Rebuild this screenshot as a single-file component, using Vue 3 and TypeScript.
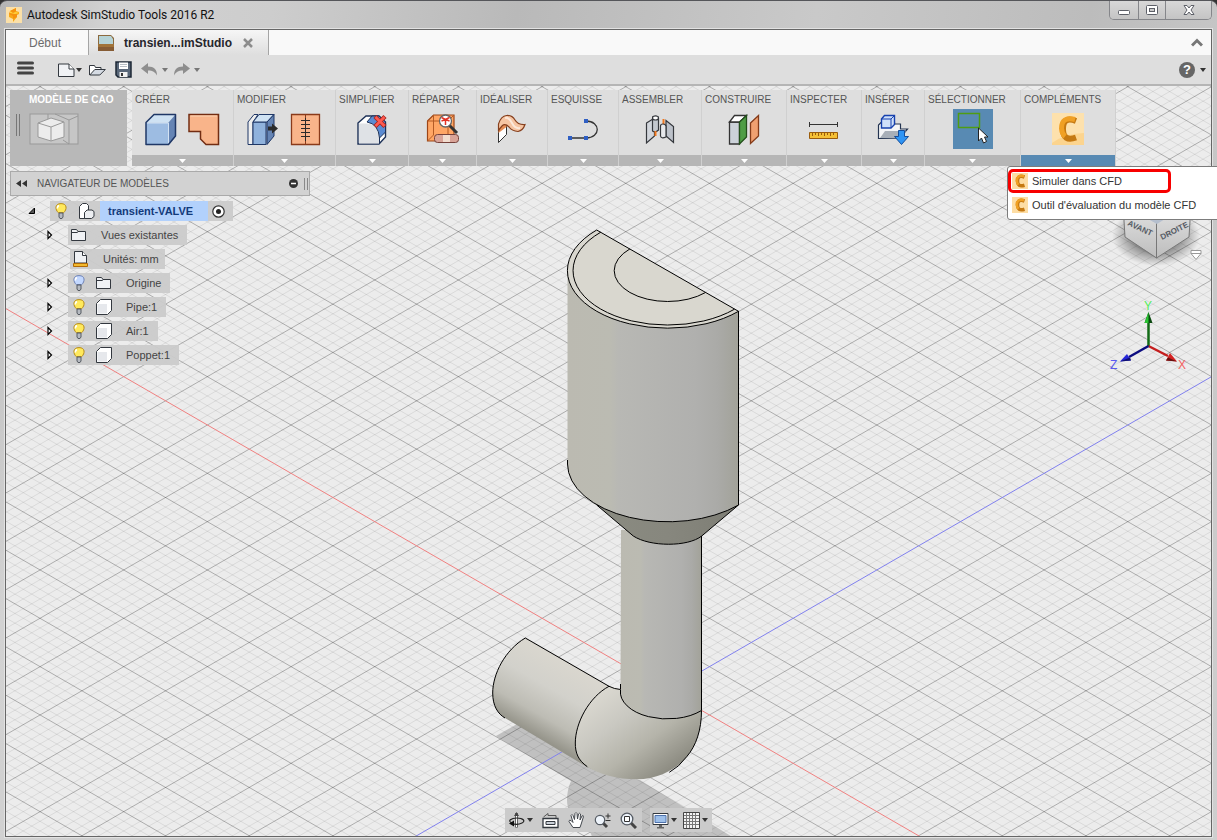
<script setup lang="ts">
interface Panel {
  id: string
  title: string
  active?: boolean
}
interface TreeRow {
  label: string
  bulb?: 'on' | 'off'
  icon: 'folder' | 'units' | 'body'
  expandable: boolean
}

const panels: Panel[] = [
  { id: 'create', title: 'CRÉER' },
  { id: 'modify', title: 'MODIFIER' },
  { id: 'simplify', title: 'SIMPLIFIER' },
  { id: 'repair', title: 'RÉPARER' },
  { id: 'idealize', title: 'IDÉALISER' },
  { id: 'sketch', title: 'ESQUISSE' },
  { id: 'assemble', title: 'ASSEMBLER' },
  { id: 'construct', title: 'CONSTRUIRE' },
  { id: 'inspect', title: 'INSPECTER' },
  { id: 'insert', title: 'INSÉRER' },
  { id: 'select', title: 'SÉLECTIONNER' },
  { id: 'addins', title: 'COMPLÉMENTS', active: true },
]

const rows: TreeRow[] = [
  { label: 'Vues existantes', icon: 'folder', expandable: true },
  { label: 'Unités: mm', icon: 'units', expandable: false },
  { label: 'Origine', bulb: 'off', icon: 'folder', expandable: true },
  { label: 'Pipe:1', bulb: 'on', icon: 'body', expandable: true },
  { label: 'Air:1', bulb: 'on', icon: 'body', expandable: true },
  { label: 'Poppet:1', bulb: 'on', icon: 'body', expandable: true },
]

const menu: string[] = ['Simuler dans CFD', "Outil d'évaluation du modèle CFD"]

// Isometric floor grid: both line families run through the origin at 30 degrees.
const origin = { x: 667.6, y: 690.8 }
const step = 48.33 / 5
const slope = 0.5776
function gridPath(major: boolean): string {
  let d = ''
  for (let i = -130; i <= 80; i++) {
    if ((i % 5 === 0) !== major || (major && i === 0)) continue
    const y = origin.y + i * step
    const l = origin.x * slope
    const r = (1217 - origin.x) * slope
    d += `M0 ${(y - l).toFixed(1)}L1217 ${(y + r).toFixed(1)}M0 ${(y + l).toFixed(1)}L1217 ${(y - r).toFixed(1)}`
  }
  return d
}
const minorGrid = gridPath(false)
const majorGrid = gridPath(true)
</script>

<template>
  <div class="window">
    <header class="titlebar">
      <svg class="app-icon" width="16" height="16" viewBox="0 0 16 16">
        <rect width="16" height="16" fill="#fbe0a8" />
        <path d="M10 1v3l3 1v2l-2 1v2l-4 5v-3l-4-2V7l1-1V4z" fill="#f8a818" />
        <path d="M4 4l6-3v3l-3 2 4 1v3l-4 2v-3L3 7z" fill="#f5920f" />
        <path d="M4 4l3 2 3-1 3 1-4 1-5-1z" fill="#ffd23c" />
      </svg>
      <h1>Autodesk SimStudio Tools 2016 R2</h1>
      <div class="win-buttons">
        <button type="button" aria-label="Réduire">
          <svg width="14" height="14" viewBox="0 0 14 14"><rect x="1.500" y="7.500" width="11" height="4" rx="1" fill="#fff" stroke="#5d6068" /></svg>
        </button>
        <button type="button" aria-label="Agrandir">
          <svg width="14" height="14" viewBox="0 0 14 14"><rect x="1.500" y="2.500" width="11" height="9" rx="1" fill="#fff" stroke="#5d6068" /><rect x="4.500" y="5.500" width="5" height="3" fill="#ccc" stroke="#5d6068" /></svg>
        </button>
        <button type="button" aria-label="Fermer">
          <svg width="14" height="14" viewBox="0 0 14 14"><path d="M2 2.500h3l2 2.500 2-2.500h3L9 7l3 4.500H9L7 9l-2 2.500H2L5 7z" fill="#fff" stroke="#5d6068" /></svg>
        </button>
      </div>
    </header>

    <div class="frame">
      <nav class="tabs">
        <button type="button" class="tab home">Début</button>
        <div class="tab current">
          <svg width="16" height="16" viewBox="0 0 16 16">
            <path d="M0 0h13l3 3v13H0z" fill="#8c6a3e" />
            <path d="M1 1h12l2 3v6H1z" fill="#b6d3d6" />
            <path d="M0 9h16v7H0z" fill="#a17339" />
            <path d="M0 12h16v4H0z" fill="#865c34" />
          </svg>
          <span>transien...imStudio</span>
          <button type="button" class="plain" aria-label="Fermer l'onglet">
            <svg width="10" height="10" viewBox="0 0 10 10"><path d="M1 1l8 8M9 1L1 9" stroke="#8c8c8c" stroke-width="2.500" /></svg>
          </button>
        </div>
        <button type="button" class="plain collapse" aria-label="Replier">
          <svg width="12" height="9" viewBox="0 0 12 9"><path d="M1 7.500l5-5 5 5" fill="none" stroke="#777" stroke-width="3" /></svg>
        </button>
      </nav>

      <div class="toolbar">
        <button type="button" class="plain menu-btn" aria-label="Menu">
          <svg width="17" height="18" viewBox="0 0 17 18"><path d="M1.500 2h14M1.500 7h14M1.500 12h14" stroke="#444" stroke-width="3" stroke-linecap="round" /></svg>
        </button>
        <button type="button" class="plain file-btn" aria-label="Nouveau">
          <svg width="17" height="14" viewBox="0 0 17 14"><path d="M.5 1h10.500l5 5v7.500H.5z" fill="#f0f2f5" stroke="#33383f" /><path d="M11 1v5h5" fill="#fff" stroke="#33383f" /></svg>
          <svg width="6" height="4" viewBox="0 0 6 4"><path d="M0 0h6L3 4z" fill="#333" /></svg>
        </button>
        <button type="button" class="plain" aria-label="Ouvrir">
          <svg width="17" height="14" viewBox="0 0 17 14"><path d="M.5 12V2.500h5l1 2h5.500v3" fill="#fff" stroke="#33383f" /><path d="M.8 12l5-5.500h10.500L10.800 12z" fill="#d5dbe3" stroke="#33383f" /></svg>
        </button>
        <button type="button" class="plain" aria-label="Enregistrer">
          <svg width="17" height="17" viewBox="0 0 17 17"><path d="M1 1h15v15H3l-2-2z" fill="#596779" stroke="#1c2735" stroke-width="1.500" /><path d="M4 1.500h9V8H4z" fill="#fff" /><path d="M5 3.500h7M5 5.500h7" stroke="#b8bec5" /><path d="M4.500 11h8v5h-8z" fill="#f1f1f1" /><path d="M6 12h2v3H6z" fill="#333" /></svg>
        </button>
        <button type="button" class="plain undo" aria-label="Annuler">
          <svg width="17" height="13" viewBox="0 0 17 13"><path d="M0 5.500L7 0v3.500c6 0 9 3 9 9C14 9 12 7.500 7 7.500V11z" fill="#8e8e8e" /></svg>
          <svg width="6" height="4" viewBox="0 0 6 4"><path d="M0 0h6L3 4z" fill="#777" /></svg>
        </button>
        <button type="button" class="plain redo" aria-label="Rétablir">
          <svg width="17" height="13" viewBox="0 0 17 13"><path d="M17 5.500L10 0v3.500c-6 0-9 3-9 9C3 9 5 7.500 10 7.500V11z" fill="#8e8e8e" /></svg>
          <svg width="6" height="4" viewBox="0 0 6 4"><path d="M0 0h6L3 4z" fill="#777" /></svg>
        </button>
        <button type="button" class="plain help" aria-label="Aide">
          <span class="help-dot">?</span>
          <svg width="6" height="4" viewBox="0 0 6 4"><path d="M0 0h6L3 4z" fill="#333" /></svg>
        </button>
      </div>

      <main class="viewport">
        <svg class="scene" viewBox="6 86 1205 750" preserveAspectRatio="xMidYMid slice">
          <defs>
            <linearGradient id="body" x1="0" x2="1" y1="0" y2="0">
              <stop offset="0" stop-color="#bbbab1" /><stop offset=".25" stop-color="#bbbbb2" />
              <stop offset=".3" stop-color="#b8b8b4" /><stop offset=".75" stop-color="#b0b0ae" />
              <stop offset=".88" stop-color="#aaaaa7" /><stop offset="1" stop-color="#a2a299" />
            </linearGradient>
            <linearGradient id="cone" x1="0" x2="1" y1="0" y2="0">
              <stop offset="0" stop-color="#8a8b81" /><stop offset=".5" stop-color="#87877e" /><stop offset="1" stop-color="#7d7d74" />
            </linearGradient>
            <linearGradient id="pipe" gradientUnits="userSpaceOnUse" x1="566" y1="660" x2="526" y2="730">
              <stop offset="0" stop-color="#dad7cf" /><stop offset=".4" stop-color="#d2d1cb" />
              <stop offset=".75" stop-color="#bdbcb4" /><stop offset="1" stop-color="#95948a" />
            </linearGradient>
            <linearGradient id="elbow" gradientUnits="userSpaceOnUse" x1="600" y1="695" x2="665" y2="782">
              <stop offset="0" stop-color="#d9d7cf" /><stop offset=".3" stop-color="#c9c8c1" />
              <stop offset=".6" stop-color="#b5b4aa" /><stop offset="1" stop-color="#85847a" />
            </linearGradient>
          </defs>
          <rect x="0" y="80" width="1217" height="760" fill="#ececec" />
          <path d="M496 736L517 724L580 758L606 774L640 780L734 838H592C590 820 567 822 567 800Q567 790 571 781Z" fill="#c0c0c0" />
          <path :d="minorGrid" stroke="#000" stroke-opacity=".08" fill="none" />
          <path :d="majorGrid" stroke="#000" stroke-opacity=".27" fill="none" />
          <path d="M0 305.200L1217 1008.100" stroke="#f08080" />
          <path d="M0 1076.400L1217 373.500" stroke="#8080ee" />

          <path d="M525.300 638L609 686.300L620 690L640 760L606.700 774Q596 771 587 767L505 718C498 714 492.700 706 492.700 693C492.700 674 505 650 525.300 638Z" fill="url(#pipe)" />
          <path d="M609 686.300L620.500 689.500L701.700 710.700C701.500 730 696 746 686.700 756.700C678 768 659 779.300 636.700 779.300C617 779.300 599 774 587.300 766.700C578 760 575.300 753 575.300 743C575.300 723 589 697 609 686.300Z" fill="url(#elbow)" />
          <path d="M621 530H701.500V710.500A47 27 0 0 1 620.500 690Z" fill="url(#body)" />
          <path d="M596.700 505L633.300 536C650 547 688 547 701.700 536L738.500 505Z" fill="url(#cone)" />
          <path d="M567.500 268V464A100.400 58 0 0 0 738.500 505V311Z" fill="url(#body)" />
          <path d="M596.700 230A100 57.400 0 0 0 738.500 311.300Z" fill="#d9d7cf" />
          <g fill="none" stroke="#000">
            <path d="M596.700 230A100 57.400 0 0 0 738.500 311.300Z" />
            <path d="M600.900 232.100A94 54 0 0 0 734.500 309.200" />
            <path d="M629.900 248.900A53 30.500 0 0 0 705.500 292.500" />
            <path d="M567.500 460V464A100.400 58 0 0 0 738.500 505V311" />
            <path d="M596.700 505L633.300 536C650 547 688 547 701.700 536L738.500 505" />
            <path d="M701.500 536V710.500A47 27 0 0 1 620.500 690" />
            <path d="M505 718C498 714 492.700 706 492.700 693C492.700 674 505 650 525.300 638L609 686.300Q614 689 620.500 689.500V684" />
            <path d="M609 686.300C589 697 575.300 723 575.300 743C575.300 753 578 760 587.300 766.700" />
            <path d="M701.500 710.700C701.500 730 696 746 686.700 756.700Q679 767 669.300 772.300" />
          </g>
        </svg>

        <section class="ribbon">
          <button type="button" class="workspace">
            <span class="grip"></span>
            <span class="workspace-body">
              <span>MODÈLE DE CAO</span>
              <svg width="50" height="32" viewBox="0 0 50 32">
                <rect x="1" y="1" width="48" height="30" fill="#c6c6c6" stroke="#999" />
                <path d="M19 1V9M26 1l14 6 9-4M40 7v24M34 27l6 4" fill="none" stroke="#999" />
                <path d="M9 10l13-5 13 4v15l-13 4-13-4z" fill="#ececec" stroke="#999" />
                <path d="M9 10l13 4 13-5M22 14v14" fill="none" stroke="#999" />
              </svg>
            </span>
          </button>
          <div class="panels">
            <div v-for="p in panels" :key="p.id" class="panel" :class="{ active: p.active }">
              <span class="panel-title">{{ p.title }}</span>
              <div class="tools">
                <template v-if="p.id === 'create'">
                  <button type="button" class="plain" aria-label="Boîte">
                    <svg class="tool" viewBox="0 0 34 34" stroke="#1f3766" stroke-linejoin="round"><path d="M2 10.500h22.500v22H2z" fill="#9dbce2" stroke="none" /><path d="M2 10.500l8-8h21.500l-7 8z" fill="#cfe2f3" stroke="none" /><path d="M24.500 10.500l7-8V24l-7 8.500z" fill="#6584b4" stroke="none" /><path d="M3 11h21.500v20.500" fill="none" stroke="#d3e2f3" /><path d="M2 10.500l8-8h21.500V24l-7 8.500H2z" fill="none" stroke-width="1.500" /></svg>
                  </button>
                  <button type="button" class="plain" aria-label="Corps">
                    <svg class="tool" viewBox="0 0 34 34"><path d="M2 2.500h29.500v30H19L13.500 27v-7.500H2z" fill="#f9b48a" stroke="#722c12" stroke-width="1.500" /><path d="M3.500 4h26.500" stroke="#fcd3b4" /></svg>
                  </button>
                </template>
                <template v-else-if="p.id === 'modify'">
                  <button type="button" class="plain" aria-label="Appuyer/Tirer">
                    <svg class="tool" viewBox="0 0 34 34" stroke="#1f3766"><path d="M2 10l6-7.500h4L7 10v22.500H2z" fill="#eee" /><path d="M7 10h13v22.500H7z" fill="#90b2dc" /><path d="M7 10l6-7.500h15l-7 7.500z" fill="#cfe2f3" /><path d="M21 10l7-7.500V24l-7 8.500z" fill="#6584b4" /><path d="M22 14.500h4v-3l6 5-6 5v-3h-4z" fill="#2b2b2b" stroke="none" /></svg>
                  </button>
                  <button type="button" class="plain" aria-label="Coudre">
                    <svg class="tool" viewBox="0 0 34 34"><path d="M2.500 2.500h28v30h-28z" fill="#f9b48a" stroke="#8a3a1a" stroke-width="1.300" /><path d="M16.500 3v29" stroke="#8a3a1a" /><path d="M16.500 6v23M12 8.500h9M12 12.500h9M12 16.500h9M12 20.500h9M12 24.500h9" stroke="#2a2a2a" /></svg>
                  </button>
                </template>
                <button v-else-if="p.id === 'simplify'" type="button" class="plain" aria-label="Simplifier">
                  <svg class="tool" viewBox="0 0 34 34" stroke="#1d3157"><path d="M3 11l8-7h13l6.500 6v15l-6.500 7H3z" fill="#fff" stroke-width="1.400" /><path d="M4 11.500h8q12 1 12 15v5H4z" fill="#dfe2e6" stroke="none" /><path d="M12 10l5-6h7l6.500 6v10l-6 6q-1-14-12.500-16z" fill="#5b8bd2" /><path d="M24.500 26v6" fill="none" /><path d="M20 4.500l10 10M30 4.500l-10 10" stroke="#a82820" stroke-width="4.500" /><path d="M20.500 5l9 9M29.500 5l-9 9" stroke="#ff5a50" stroke-width="2.500" /></svg>
                </button>
                <button v-else-if="p.id === 'repair'" type="button" class="plain" aria-label="Réparer">
                  <svg class="tool" viewBox="0 0 34 34"><path d="M1.500 9l6-6H28v20l-6 6H1.500z" fill="#ffa665" stroke="#9c4516" stroke-width="1.200" /><path d="M1.500 9H22V29M22 9l6-6M7.500 3v20l-6 6" fill="none" stroke="#b45b25" /><path d="M23 13l8 8" stroke="#333" stroke-width="3" /><circle cx="19.500" cy="9" r="6" fill="#fff" stroke="#666" stroke-width="1.300" /><path d="M15.500 5.500l4 2 4-2M15.500 9l4-1.500V13M23.500 9l-4-1.500" fill="none" stroke="#e33224" stroke-width="1.500" /><rect x="8.500" y="22.500" width="24" height="8" rx="3" fill="#d9a498" stroke="#75413a" /><path d="M17 23h7v7h-7z" fill="#f2ddcf" /></svg>
                </button>
                <button v-else-if="p.id === 'idealize'" type="button" class="plain" aria-label="Idéaliser">
                  <svg class="tool" viewBox="0 0 34 34"><path d="M3.500 14v16.500l8-8V10z" fill="#fff" stroke="#333" /><path d="M3.500 21V12L11.500 8v7z" fill="#e58d55" /><path d="M3.500 12Q6 4 11.500 3.500 17 3 20 8t10 4.500q-2 6-7 7Q17 19 14 15q-4-4-7-1-2 2-3.500 5z" fill="#f6c5a3" stroke="#863f1d" stroke-width="1.200" /><path d="M10 6q4-1 7 5t8 5" fill="none" stroke="#fff" stroke-width="2" opacity=".6" /></svg>
                </button>
                <button v-else-if="p.id === 'sketch'" type="button" class="plain" aria-label="Esquisse">
                  <svg class="tool" viewBox="0 0 34 34"><path d="M4 26h16c15 0 15-17 0-17" fill="none" stroke="#333" stroke-width="1.300" /><path d="M2 24h4v4H2zM18 24h4v4h-4zM18 7h4v4h-4z" fill="#2f5fc4" /></svg>
                </button>
                <button v-else-if="p.id === 'assemble'" type="button" class="plain" aria-label="Assembler">
                  <svg class="tool" viewBox="0 0 34 34" stroke="#35383d" stroke-width="1.200"><path d="M3.500 11l8-5v18l-8 7z" fill="#d2d6dc" /><path d="M9.500 6q0-2 3-2t3 2v12q-3 3-6 1z" fill="#c3c8cf" /><ellipse cx="12.500" cy="6" rx="3" ry="2" fill="#fff" /><path d="M12.500 19v5M20.500 7v6" stroke="#f07820" stroke-width="2" /><path d="M23 8.500l7.500 6v16L23 24z" fill="#bcc1c9" /><path d="M17.500 14q0-2 2.500-2t3 2v11q-5 2-5.500-1z" fill="#e6e8eb" /></svg>
                </button>
                <button v-else-if="p.id === 'construct'" type="button" class="plain" aria-label="Construire">
                  <svg class="tool" viewBox="0 0 34 34" stroke-width="1.300"><path d="M2.500 10h10v22h-10z" fill="#ccd2d9" stroke="#333" /><path d="M2.500 10l5-6.500h12l-7 6.500z" fill="#fff" stroke="#333" /><path d="M12.500 10l7-6.500V25l-7 7z" fill="#4f9d45" stroke="#234f1c" /><path d="M23.500 11l8-7.500V24l-8 7.500z" fill="#f0a070" stroke="#843b19" /></svg>
                </button>
                <button v-else-if="p.id === 'inspect'" type="button" class="plain" aria-label="Mesurer">
                  <svg class="tool" viewBox="0 0 34 34"><path d="M2.500 12.500h28M2.500 10v5M30.500 10v5" stroke="#333" /><path d="M2.500 20.500h28v6h-28z" fill="#f5c035" stroke="#9a5c0c" /><path d="M5.500 21v3M8.500 21v2M11.500 21v3M14.500 21v2M17.500 21v3M20.500 21v2M23.500 21v3M26.500 21v2" stroke="#9a5c0c" /></svg>
                </button>
                <button v-else-if="p.id === 'insert'" type="button" class="plain" aria-label="Insérer">
                  <svg class="tool" viewBox="0 0 34 34"><path d="M2.500 26.500V13l3-3h13v2h6v5h7l-8 9.500z" fill="#f4f5f7" stroke="#243451" stroke-width="1.200" /><path d="M4 26l5-7h21l-7 7.500z" fill="#a8afb8" /><path d="M5.500 7l3-3.500h10v9L15 16H5.500z" fill="#cfe0fa" stroke="#1741ae" stroke-width="1.400" /><path d="M5.500 7H15v9M15 7l3.500-3.500" fill="none" stroke="#1741ae" /><path d="M22.500 18.500h6v6h4l-7 8-7-8h4z" fill="#2e94f4" stroke="#124c9b" /></svg>
                </button>
                <button v-else-if="p.id === 'select'" type="button" class="plain select-on" aria-label="Sélectionner">
                  <svg width="40" height="40" viewBox="0 0 40 40"><rect x="5.500" y="4.500" width="21" height="14" fill="none" stroke="#4f9d12" stroke-width="1.500" /><path d="M25.500 19v13l3-3 2 5 3-1.500-2-4.500h3.500z" fill="#fff" stroke="#222" /></svg>
                </button>
                <button v-else type="button" class="plain" aria-label="CFD">
                  <svg width="32" height="32" viewBox="0 0 32 32"><rect width="32" height="32" fill="#fcd48e" /><path d="M0 0h32v20Q14 20 0 30z" fill="#fde1ad" /><path d="M24 8Q11 3 11 16t13 8.500" fill="none" stroke="#c57912" stroke-width="6" /><path d="M23 6.500Q9.500 3 9.500 15.500 10 21 13 23.500" fill="none" stroke="#f0a024" stroke-width="5" /></svg>
                </button>
              </div>
              <button type="button" class="panel-foot" :aria-label="p.title">
                <svg width="7" height="4" viewBox="0 0 7 4"><path d="M0 0h7L3.500 4z" fill="#fff" /></svg>
              </button>
            </div>
            <ul class="addin-menu">
              <li v-for="(m, i) in menu" :key="m">
                <button type="button" :class="{ marked: i === 0 }">
                  <svg width="16" height="16" viewBox="0 0 32 32"><rect width="32" height="32" fill="#fddda4" /><path d="M25 8Q11 3 11 16t14 8.500" fill="none" stroke="#c57912" stroke-width="7" /><path d="M24 6.500Q9.500 3 9.500 15.500 10 21 13 23.500" fill="none" stroke="#f0a024" stroke-width="5" /></svg>
                  <span>{{ m }}</span>
                </button>
              </li>
            </ul>
          </div>
        </section>

        <aside class="browser">
          <div class="browser-head">
            <svg width="11" height="7" viewBox="0 0 11 7"><path d="M5 0v7L0 3.500zM11 0v7L6 3.500z" fill="#333" /></svg>
            <h2>NAVIGATEUR DE MODÈLES</h2>
            <svg width="9" height="9" viewBox="0 0 9 9"><circle cx="4.500" cy="4.500" r="4.500" fill="#333" /><path d="M2 4.500h5" stroke="#fff" stroke-width="1.500" /></svg>
            <span class="head-grip"></span>
          </div>
          <div class="tree">
            <div class="row root">
              <svg class="twist" width="8" height="8" viewBox="0 0 8 8"><path d="M6.500 1v5.500H1z" fill="#555" stroke="#000" /></svg>
              <div class="cell">
                <svg class="bulb" width="12" height="16" viewBox="0 0 12 16"><path d="M6 .6c6.500 0 6 6 2.700 9H3.300C0 6.600-.5.600 6 .6z" fill="#ffe95c" stroke="#b58a1b" /><path d="M4 2.500q-2 1-1.500 3" fill="none" stroke="#fff" stroke-width="1.500" /><path d="M4 10h4v4l-1 1.500H5L4 14z" fill="#b5b9c0" stroke="#555a62" /></svg>
                <svg class="asm" width="17" height="17" viewBox="0 0 17 17"><path d="M1.500 15.500V3.500l3-3h4l2 2v5L7 9.500v6z" fill="#fff" stroke="#33383f" /><path d="M6.500 15.500V9.500L9 7h5l2 1.500v5L13.500 15.500z" fill="#eceef1" stroke="#33383f" /></svg>
                <strong>transient-VALVE</strong>
                <svg width="13" height="13" viewBox="0 0 13 13"><circle cx="6.500" cy="6.500" r="5.700" fill="#fff" stroke="#333" stroke-width="1.200" /><circle cx="6.500" cy="6.500" r="2.500" fill="#222" /></svg>
              </div>
            </div>
            <div v-for="r in rows" :key="r.label" class="row">
              <svg class="twist" width="8" height="10" viewBox="0 0 8 10"><path v-if="r.expandable" d="M2 1.500v7L5.500 5z" fill="#fff" stroke="#000" stroke-width="1.200" /></svg>
              <div class="cell" :class="{ units: r.icon === 'units' }">
                <svg v-if="r.bulb" class="bulb" width="12" height="16" viewBox="0 0 12 16"><path d="M6 .6c6.500 0 6 6 2.700 9H3.300C0 6.600-.5.600 6 .6z" :fill="r.bulb === 'on' ? '#ffe95c' : '#c3d8ff'" :stroke="r.bulb === 'on' ? '#b58a1b' : '#6d80b3'" /><path d="M4 2.500q-2 1-1.500 3" fill="none" stroke="#fff" stroke-width="1.500" /><path d="M4 10h4v4l-1 1.500H5L4 14z" fill="#b5b9c0" stroke="#555a62" /></svg>
                <svg v-if="r.icon === 'folder'" width="16" height="16" viewBox="0 0 16 16"><path d="M.5 13.500v-11h5l1.500 2h7.500v9z" fill="#eff1f4" stroke="#33383f" /><path d="M1 5.500h5l1.500-1" fill="none" stroke="#33383f" /></svg>
                <svg v-else-if="r.icon === 'units'" width="16" height="16" viewBox="0 0 16 16"><path d="M1.500 12V.5h8l4 4V12z" fill="#eff1f4" stroke="#33383f" /><path d="M9.500.5v4h4" fill="#fff" stroke="#33383f" /><path d="M.5 12.500h14v3H.5z" fill="#f3b92c" stroke="#b06a08" /></svg>
                <svg v-else width="16" height="16" viewBox="0 0 16 16"><path d="M.5 4.500l4-4h11v11l-4 4H.5z" fill="#fff" stroke="#33383f" /><path d="M1.500 5h9.500v9.500H1.500z" fill="#e6e8ec" /></svg>
                <span class="name">{{ r.label }}</span>
              </div>
            </div>
          </div>
        </aside>

        <svg class="orient" width="112" height="170" viewBox="1102 206 112 170">
          <defs>
            <radialGradient id="cubeshade"><stop offset=".3" stop-color="#000" stop-opacity=".6" /><stop offset="1" stop-color="#000" stop-opacity="0" /></radialGradient>
            <linearGradient id="face" x1="0" x2="0" y1="0" y2="1"><stop offset="0" stop-color="#e2e2e2" /><stop offset="1" stop-color="#bdbdbd" /></linearGradient>
          </defs>
          <ellipse cx="1156" cy="236" rx="44" ry="30" fill="url(#cubeshade)" />
          <path d="M1124 206h33v52l-32-21z" fill="url(#face)" />
          <path d="M1157 206h33l-1 31-32 21z" fill="url(#face)" />
          <path d="M1124 206v15l1 16 31.500 21 32.500-21 1-16v-15M1156.500 222v36" fill="none" stroke="#777" />
          <path d="M1148 219l9 5 8-5z" fill="#b5bfce" />
          <g class="cube-text">
            <text transform="translate(1127 225) rotate(25)">AVANT</text>
            <text transform="translate(1162 240) rotate(-27)">DROITE</text>
          </g>
          <path d="M1191 250.500h10v3l-5 6-5-6z M1191 253.500h10" fill="#fff" stroke="#999" />
          <path d="M1148.500 346V318" stroke="#126b16" stroke-width="2.500" />
          <path d="M1148.500 312l4 11h-8z" fill="#0b4910" /><path d="M1148.500 312v11h-4z" fill="#28c531" />
          <path d="M1148.500 346L1168 356" stroke="#c41e1e" stroke-width="2.500" />
          <path d="M1177 361.500l-11-1 4-7.500z" fill="#d42222" /><path d="M1177 361.500l-11-1 2-3z" fill="#681111" />
          <path d="M1148.500 346L1129 357" stroke="#0c0c80" stroke-width="2.500" />
          <path d="M1120 361.500l7-7.500 4 6.500z" fill="#2828d8" /><path d="M1120 361.500l10-4 1 3z" fill="#101070" />
          <g class="axis-text">
            <text x="1144" y="310" fill="#52ee5a">Y</text>
            <text x="1178" y="369" fill="#f46262">X</text>
            <text x="1110" y="369" fill="#5a5af0">Z</text>
          </g>
        </svg>

        <div class="navbar">
          <div class="nav-group">
            <button type="button" class="plain" aria-label="Orbite">
              <svg width="17" height="17" viewBox="0 0 17 17"><path d="M8.500 15.500V1" stroke="#444" stroke-width="2.500" /><path d="M8.500 15V2" stroke="#fff" /><path d="M6 4l2.500-4L11 4z" fill="#444" /><path d="M4 11C-1 9 3 6 9 6s9 3 5 5-5 1.500-9 1" fill="none" stroke="#222" stroke-width="1.200" /><path d="M1 11.500l5-3v6z" fill="#111" /></svg>
              <svg class="nav-caret" width="6" height="4" viewBox="0 0 6 4"><path d="M0 0h6L3 4z" fill="#333" /></svg>
            </button>
            <button type="button" class="plain" aria-label="Regarder">
              <svg width="17" height="17" viewBox="0 0 17 17"><path d="M1 6.500h15v9H1z" fill="#fff" stroke="#33383f" stroke-width="1.300" /><path d="M4 9.500h9v3H4z" fill="#cbd1d9" stroke="#33383f" /><path d="M1.500 5L6 1.500v2h8V6" fill="none" stroke="#555" /></svg>
            </button>
            <button type="button" class="plain" aria-label="Panoramique">
              <svg width="17" height="17" viewBox="0 0 17 17"><path d="M5 15.500L1 9.500q0-2 2-1l2 2-2-7q1-2 2 0l1.500 4L7 1.500q1-2 2 0L9.500 7l1-5q1-1.500 2 0L12 8l2-4q1.500-1 1.500.5L13.500 11 12 15.500z" fill="#fff" stroke="#44484e" /></svg>
            </button>
            <button type="button" class="plain" aria-label="Zoom">
              <svg width="17" height="17" viewBox="0 0 17 17"><path d="M9 11l4 4" stroke="#444" stroke-width="3" /><circle cx="6" cy="8" r="4.700" fill="#eef4fb" stroke="#555b63" stroke-width="1.200" /><path d="M11.500 4h5M14 1.500v5M11.500 8.500h5" stroke="#333" /></svg>
            </button>
            <button type="button" class="plain" aria-label="Ajuster">
              <svg width="17" height="17" viewBox="0 0 17 17"><path d="M11 11l5 5" stroke="#444" stroke-width="3" /><circle cx="7" cy="7" r="5.800" fill="#eef4fb" stroke="#555b63" stroke-width="1.300" /><path d="M4.500 4.500h5v5h-5z" fill="#fff" stroke="#333" /></svg>
            </button>
          </div>
          <div class="nav-group">
            <button type="button" class="plain" aria-label="Affichage">
              <svg width="17" height="17" viewBox="0 0 17 17"><path d="M1 1.500h15v11H1z" fill="#fff" stroke="#33383f" /><path d="M3 3.500h11v7H3z" fill="#9dbfea" stroke="#4e72ac" /><path d="M7 13h3v2h2v1.500H5V15h2z" fill="#666" /></svg>
              <svg width="6" height="4" viewBox="0 0 6 4"><path d="M0 0h6L3 4z" fill="#333" /></svg>
            </button>
            <button type="button" class="plain" aria-label="Grille">
              <svg width="17" height="17" viewBox="0 0 17 17"><path d="M.5.500h16v16H.5z" fill="#f4f4f4" stroke="#444" /><path d="M3.500 1v15M6.500 1v15M9.500 1v15M12.500 1v15M1 3.500h15M1 6.500h15M1 9.500h15M1 12.500h15" stroke="#777" /></svg>
              <svg width="6" height="4" viewBox="0 0 6 4"><path d="M0 0h6L3 4z" fill="#333" /></svg>
            </button>
          </div>
        </div>
      </main>
    </div>
  </div>
</template>

<style>
body {
  margin: 0;
  background: #333;
}
</style>

<style scoped>
.window {
  box-sizing: border-box;
  min-height: 100vh;
  display: flex;
  flex-direction: column;
  padding: 0 5px 3px;
  overflow: hidden;
  border-radius: 7px 7px 0 0;
  border-top: 1px solid #55565a;
  background: linear-gradient(100deg, #b4b4b4 0, #d2d2d2 8%, #cdcdcd 20%, #b9b9b9 38%, #c9c9c9 60%, #bcbcbc 80%, #cfcfcf 100%);
  font-family: "Liberation Sans", Arial, sans-serif;
  font-size: 11px;
  color: #444;
}
button {
  font: inherit;
  color: inherit;
  margin: 0;
  border: 0;
}
svg {
  display: block;
  flex: none;
}
.plain {
  display: flex;
  align-items: center;
  padding: 0;
  background: none;
}
.titlebar {
  display: flex;
  align-items: center;
  height: 28px;
  padding-left: 1px;
}
.titlebar h1 {
  margin: 0 0 0 5px;
  font: 12px Roboto, "Open Sans", sans-serif;
  color: #111;
}
.win-buttons {
  display: flex;
  align-self: flex-start;
  height: 18px;
  margin-left: auto;
  border: 1px solid #85868a;
  border-top: 0;
  border-radius: 0 0 5px 5px;
}
.win-buttons button {
  display: flex;
  justify-content: center;
  align-items: center;
  width: 27px;
  padding: 0;
  background: linear-gradient(#d8d8d8, #c4c4c4);
  border-right: 1px solid #85868a;
}
.win-buttons button:first-child {
  width: 29px;
  border-radius: 0 0 0 4px;
}
.win-buttons button:last-child {
  width: 45px;
  border-right: 0;
  border-radius: 0 0 4px 0;
}
.frame {
  flex: 1;
  display: flex;
  flex-direction: column;
  border: 1px solid #666;
  outline: 1px solid #e2e2e2;
}
.tabs {
  display: flex;
  height: 25px;
  background: #f9f9f9;
}
.tab {
  display: flex;
  align-items: center;
  font-size: 12px;
  border-right: 1px solid #a5a5a5;
}
.home {
  width: 83px;
  padding: 0 0 0 23px;
  background: #f9f9f9;
  color: #6c6c6c;
}
.current {
  gap: 10px;
  padding: 0 15px 0 9px;
  background: linear-gradient(#f6f6f6, #dedede);
  color: #26262c;
  font-weight: bold;
}
.current .plain {
  margin-left: 1px;
}
.collapse {
  margin: 0 8px 0 auto;
}
.toolbar {
  display: flex;
  align-items: center;
  height: 29px;
  padding: 0 5px 0 11px;
  background: #dedede;
  border-bottom: 2px solid #b5b5b5;
}
.toolbar .plain {
  margin-right: 9px;
}
.toolbar .menu-btn {
  margin-right: 24px;
}
.toolbar .file-btn {
  gap: 1px;
  margin-right: 7px;
}
.toolbar .undo {
  gap: 4px;
  margin-right: 5px;
}
.toolbar .redo {
  gap: 4px;
}
.toolbar .help {
  gap: 5px;
  margin: 0 0 0 auto;
}
.help-dot {
  width: 16px;
  height: 16px;
  border-radius: 50%;
  background: #666;
  color: #fff;
  font-weight: bold;
  font-size: 13px;
  line-height: 16px;
  text-align: center;
}
.viewport {
  flex: 1;
  position: relative;
  min-height: 600px;
  background: #ececec;
}
.scene {
  position: absolute;
  inset: 0;
  width: 100%;
  height: 100%;
}
.ribbon {
  position: relative;
  z-index: 2;
  display: flex;
  gap: 5px;
  padding: 4px 4px 0;
}
.workspace {
  display: flex;
  gap: 9px;
  width: 117px;
  padding: 4px 6px;
  background: #b8b8b8;
  color: #fff;
  font-size: 10px;
  font-weight: bold;
  white-space: nowrap;
}
.workspace-body {
  display: flex;
  flex-direction: column;
  gap: 8px;
  text-align: left;
}
.grip {
  width: 4px;
  height: 22px;
  margin-top: 20px;
  box-sizing: border-box;
  border: 1px solid #777;
  border-width: 0 1px;
}
.panels {
  position: relative;
  display: grid;
  grid-template-columns: 102px 102px 73px 68px 71px 71px 83px 85px 75px 63px 96px 95px;
}
.panel {
  display: flex;
  flex-direction: column;
  background: #dedede;
  border-right: 1px solid #d0d0d0;
}
.panel-title {
  height: 19px;
  padding-left: 3px;
  font-size: 10px;
  line-height: 19px;
  color: #555;
  white-space: nowrap;
}
.tools {
  display: flex;
  justify-content: center;
  align-items: center;
  gap: 9px;
  height: 40px;
  margin-bottom: 6px;
}
.tool {
  width: 34px;
  height: 34px;
}
.select-on {
  background: #588ab3;
}
.panel-foot {
  display: flex;
  justify-content: center;
  align-items: center;
  height: 11px;
  padding: 0;
  background: #b6b6b6;
}
.active .panel-foot {
  background: #588ab3;
}
.addin-menu {
  position: absolute;
  top: 76px;
  right: -102px;
  z-index: 3;
  margin: 0;
  padding: 2px 0;
  width: 211px;
  box-sizing: border-box;
  list-style: none;
  background: #fff;
  border: 1px solid #7c7c7c;
  border-radius: 3px 0 0 3px;
}
.addin-menu button {
  box-sizing: border-box;
  display: flex;
  align-items: center;
  gap: 4px;
  height: 24px;
  padding: 0 4px;
  background: none;
  color: #333;
  white-space: nowrap;
}
.addin-menu .marked {
  width: 163px;
  padding: 0 1px;
  border: 3px solid #f80000;
  border-radius: 5px;
}
.browser {
  position: relative;
  z-index: 1;
  width: 300px;
  margin: 5px 0 0 4px;
}
.browser-head {
  display: flex;
  align-items: center;
  height: 23px;
  padding: 0 1px 0 5px;
  background: #d2d2d2;
  border: 1px solid #aaa;
}
.browser-head h2 {
  margin: 0 auto 0 10px;
  font-size: 10px;
  font-weight: normal;
  color: #555;
}
.head-grip {
  width: 2px;
  height: 12px;
  margin-left: 6px;
  border: 1px solid #888;
  border-width: 0 1px;
}
.tree {
  display: flex;
  flex-direction: column;
  gap: 4px;
  padding-top: 5px;
}
.row {
  display: flex;
  align-items: center;
  height: 20px;
  padding-left: 36px;
}
.row .twist {
  margin-right: 14px;
}
.cell {
  display: flex;
  align-items: center;
  height: 20px;
  padding: 0 9px 0 3px;
  background: rgba(203, 203, 203, 0.94);
  white-space: nowrap;
}
.units {
  margin-left: 2px;
  padding-right: 6px;
}
.bulb {
  margin: 0 11px 0 2px;
}
.name {
  margin-left: 14px;
}
.root {
  padding-left: 18px;
}
.root .cell {
  padding-right: 8px;
}
.root .asm {
  margin-right: 5px;
}
.root strong {
  padding: 0 15px 0 8px;
  margin-right: 4px;
  line-height: 20px;
  background: #b2d1fc;
  color: #123a7a;
}
.orient {
  position: absolute;
  top: 120px;
  right: -3px;
}
.cube-text {
  font: bold 8px "Liberation Sans", Arial, sans-serif;
  fill: #555b64;
}
.axis-text {
  font: 12px "Liberation Sans", Arial, sans-serif;
}
.navbar {
  position: absolute;
  left: 0;
  right: 0;
  bottom: 4px;
  display: flex;
  justify-content: center;
  gap: 8px;
}
.nav-group {
  display: flex;
  align-items: center;
  gap: 9px;
  height: 24px;
  padding: 0 5px 0 3px;
  background: #cbcbcb;
}
.nav-group .plain {
  gap: 2px;
}
.nav-group + .nav-group {
  gap: 6px;
  padding: 0 4px 0 2px;
}
</style>
